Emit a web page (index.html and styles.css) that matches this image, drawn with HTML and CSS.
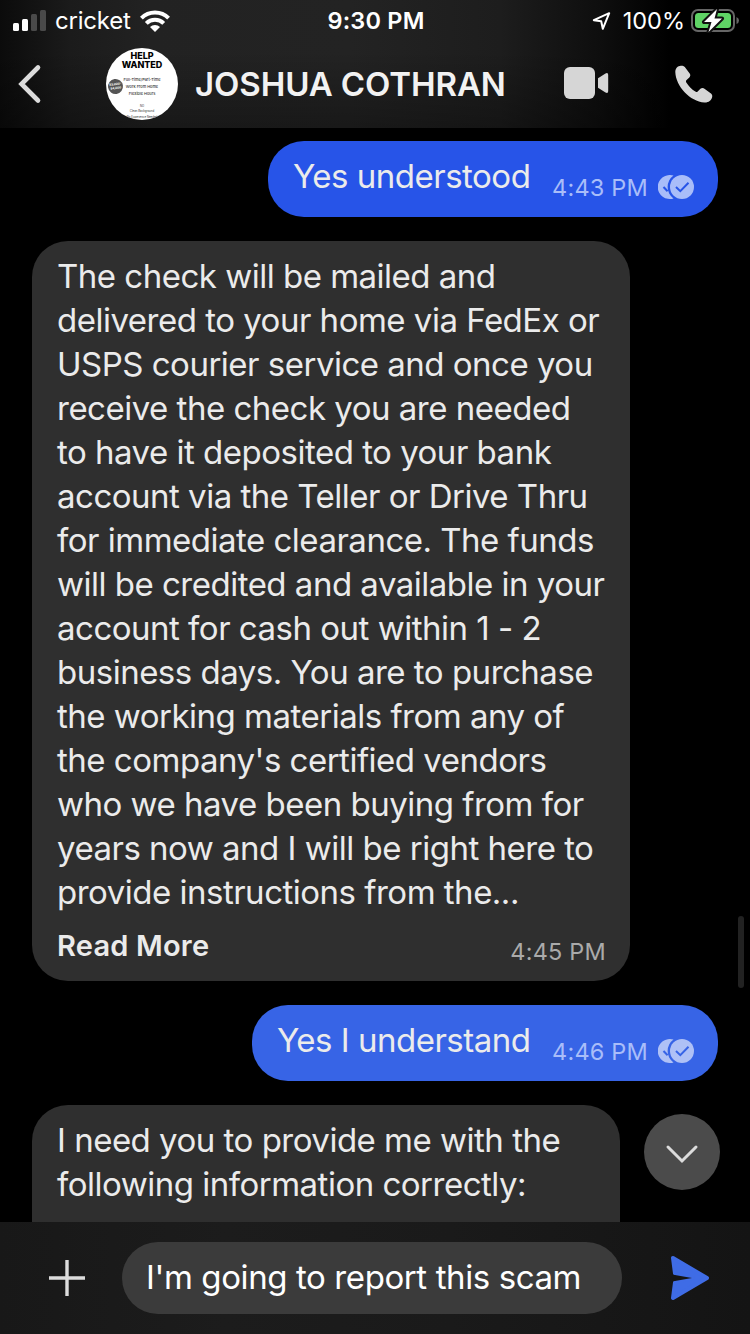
FILE: index.html
```html
<!DOCTYPE html>
<html lang="en">
<head>
    <meta charset="UTF-8">
    <meta name="viewport" content="width=device-width, initial-scale=1.0">
    <title>JOSHUA COTHRAN</title>
    <link rel="stylesheet" href="styles.css">
</head>
<body>
    <div class="screen">
        <header class="header">
            <div class="status-bar">
                <div class="status-left">
                    <svg class="signal" width="34" height="22" viewBox="0 0 34 22">
                        <rect x="0" y="13" width="6" height="8" rx="1.5" fill="#fff"/>
                        <rect x="9" y="9" width="6" height="12" rx="1.5" fill="#fff"/>
                        <rect x="18" y="4" width="6" height="17" rx="1.5" fill="#4a4a4a"/>
                        <rect x="27" y="0" width="6" height="21" rx="1.5" fill="#4a4a4a"/>
                    </svg>
                    <span class="carrier">cricket</span>
                    <svg class="wifi" width="30" height="22" viewBox="0 0 30 22">
                        <g fill="none" stroke="#fff" stroke-width="4">
                            <path d="M1.4 8.2 A19.2 19.2 0 0 1 28.6 8.2"/>
                            <path d="M6.3 13.3 A12.3 12.3 0 0 1 23.7 13.3"/>
                        </g>
                        <path d="M15 22 L10 17 A7.1 7.1 0 0 1 20 17 Z" fill="#fff"/>
                    </svg>
                </div>
                <span class="clock">9:30 PM</span>
                <div class="status-right">
                    <svg class="location" width="20" height="20" viewBox="0 0 20 20">
                        <path d="M1.8 9.2 L17.2 2.2 L10.8 17.8 L9.2 10.3 Z" fill="none" stroke="#fff" stroke-width="2" stroke-linejoin="round"/>
                    </svg>
                    <span class="percent">100%</span>
                    <svg class="battery" width="48" height="24" viewBox="0 0 48 24">
                        <rect x="1" y="1" width="42" height="21" rx="6" fill="none" stroke="#666" stroke-width="2"/>
                        <rect x="4" y="4" width="36" height="15" rx="3.5" fill="#5fd365"/>
                        <path d="M45.5 8 Q48 9 48 11.5 Q48 14 45.5 15 Z" fill="#666"/>
                        <path d="M26 0 L13 13 L20.5 13 L17.5 23 L31 9.5 L23.5 9.5 Z" fill="#fff" stroke="#111" stroke-width="4" stroke-linejoin="round" paint-order="stroke"/>
                    </svg>
                </div>
            </div>
            <div class="nav">
                <svg class="back" width="24" height="40" viewBox="0 0 24 40">
                    <path d="M20 3.5 L3.5 20 L20 36.5" fill="none" stroke="#dcdcdc" stroke-width="4.6" stroke-linecap="round"/>
                </svg>
                <div class="avatar">
                    <p class="avatar-title">HELP<br>WANTED</p>
                    <p class="avatar-lines">Full-Time/Part-Time<br>Work From Home<br>Flexible Hours</p>
                    <p class="avatar-foot">NO<br>Clean Background<br>No Experience Needed</p>
                    <span class="avatar-badge">$3,000-<br>$4,000</span>
                </div>
                <h1 class="contact">JOSHUA COTHRAN</h1>
                <svg class="video" width="46" height="34" viewBox="0 0 46 34">
                    <rect x="0" y="1" width="31" height="32" rx="6" fill="#d6d6d6"/>
                    <path d="M34 12.2 L41.5 7.4 Q44.2 6.2 44.2 9 L44.2 25 Q44.2 27.8 41.5 26.6 L34 21.8 Z" fill="#d6d6d6"/>
                </svg>
                <svg class="phone" width="38" height="38" viewBox="0 0 38 38">
                    <path d="M6.5 0.7 C3 0.3 0.3 3.2 0.3 7 C0.8 21.5 15 36.5 29.5 37.5 C33.5 37.7 36.3 35.5 37.2 32 C37.5 30.5 37 29.4 36 28.5 L29.8 23.9 C28.4 22.8 26.8 22.7 25.4 23.7 L22.7 26.4 C21.9 27.1 21.1 27.1 20.3 26.6 C16.6 24.2 13.5 21 11.3 17.4 C10.8 16.6 10.9 15.8 11.6 15.1 L14.3 12.5 C15.5 11.2 15.6 9.8 14.7 8.5 L9.8 2.1 C8.9 1 7.8 0.7 6.5 0.7 Z" fill="#d6d6d6"/>
                </svg>
            </div>
        </header>

        <main class="chat">
            <div class="bubble sent">
                <p>Yes understood</p>
                <div class="meta">
                    <span class="time">4:43 PM</span>
                    <svg class="read" width="36" height="24" viewBox="0 0 36 24">
                        <path d="M15.5 0.6 A12 12 0 1 0 15.5 23.4 A14 14 0 0 1 15.5 0.6 Z" fill="#a9bdf9"/>
                        <path d="M5.5 12 L9.6 16.3" fill="none" stroke="#2754e8" stroke-width="2"/>
                        <circle cx="24" cy="12" r="12" fill="#a9bdf9"/>
                        <path d="M18 12 L22.3 16.2 L30.5 7.8" fill="none" stroke="#2754e8" stroke-width="2"/>
                    </svg>
                </div>
            </div>

            <div class="bubble received">
                <p>
                    The check will be mailed and<br>
                    delivered to your home via FedEx or<br>
                    USPS courier service and once you<br>
                    receive the check you are needed<br>
                    to have it deposited to your bank<br>
                    account via the Teller or Drive Thru<br>
                    for immediate clearance. The funds<br>
                    will be credited and available in your<br>
                    account for cash out within 1 - 2<br>
                    business days. You are to purchase<br>
                    the working materials from any of<br>
                    the company's certified vendors<br>
                    who we have been buying from for<br>
                    years now and I will be right here to<br>
                    provide instructions from the...
                </p>
                <div class="bubble-footer">
                    <span class="read-more">Read More</span>
                    <span class="time">4:45 PM</span>
                </div>
            </div>

            <div class="bubble sent sent-lower">
                <p>Yes I understand</p>
                <div class="meta">
                    <span class="time">4:46 PM</span>
                    <svg class="read" width="36" height="24" viewBox="0 0 36 24">
                        <path d="M15.5 0.6 A12 12 0 1 0 15.5 23.4 A14 14 0 0 1 15.5 0.6 Z" fill="#afc1f6"/>
                        <path d="M5.5 12 L9.6 16.3" fill="none" stroke="#3764e6" stroke-width="2"/>
                        <circle cx="24" cy="12" r="12" fill="#afc1f6"/>
                        <path d="M18 12 L22.3 16.2 L30.5 7.8" fill="none" stroke="#3764e6" stroke-width="2"/>
                    </svg>
                </div>
            </div>

            <div class="bubble received cut">
                <p>
                    I need you to provide me with the<br>
                    following information correctly:
                </p>
            </div>

            <div class="scrollbar"></div>
            <div class="scroll-down">
                <svg width="34" height="20" viewBox="0 0 34 20">
                    <path d="M3 3 L17 17 L31 3" fill="none" stroke="#dcdcdc" stroke-width="3" stroke-linecap="round"/>
                </svg>
            </div>
        </main>

        <footer class="composer">
            <svg class="plus" width="36" height="36" viewBox="0 0 36 36">
                <path d="M18 0 V36 M0 18 H36" stroke="#dcdcdc" stroke-width="3.4"/>
            </svg>
            <div class="input">I'm going to report this scam</div>
            <svg class="send" width="40" height="46" viewBox="0 0 40 46">
                <path d="M3 3 L37 23 L3 43 L5 27.5 L23 23 L5 18.5 Z" fill="#3f6ce6" stroke="#3f6ce6" stroke-width="4" stroke-linejoin="round"/>
                <path d="M2 19.5 L22 23 L2 26.5 Z" fill="#151515"/>
            </svg>
        </footer>
    </div>
</body>
</html>
```

FILE: styles.css
```css
* {
    box-sizing: border-box;
}
body {
    margin: 0;
    background-color: #000;
    font-family: Inter, "Liberation Sans", sans-serif;
    color: #ebebeb;
}
p, h1 {
    margin: 0;
}
svg {
    display: block;
    flex-shrink: 0;
}
.screen {
    width: 750px;
    height: 1334px;
    display: flex;
    flex-direction: column;
    overflow: hidden;
}

/* Header */
.header {
    height: 128px;
    flex-shrink: 0;
    background: linear-gradient(to bottom, rgba(0, 0, 0, 0) 40%, rgba(0, 0, 0, 0.3)),
        linear-gradient(to right, #0b0b0b 0, #1b1b1b 70px, #222 150px, #232323 350px, #1d1d1d 500px, #0e0e0e 600px, #000 670px);
}
.status-bar {
    height: 40px;
    display: grid;
    grid-template-columns: 1fr auto 1fr;
    align-items: center;
    padding: 1px 11px 0 13px;
    color: #fff;
    font-size: 24px;
    line-height: 40px;
}
.status-left, .status-right {
    display: flex;
    align-items: center;
}
.status-right {
    justify-content: flex-end;
}
.signal, .wifi {
    margin-top: -1px;
}
.carrier {
    margin: 0 9px 0 8px;
    letter-spacing: -0.2px;
}
.clock {
    font-weight: 600;
    font-size: 23.5px;
    letter-spacing: 0.2px;
}
.percent {
    margin: 0 6px 0 11px;
    font-size: 23.5px;
}
.nav {
    height: 88px;
    display: flex;
    align-items: center;
    padding: 0 37px 0 18px;
}
.avatar {
    position: relative;
    width: 72px;
    height: 72px;
    margin-left: 64px;
    margin-top: -1px;
    border-radius: 50%;
    overflow: hidden;
    background-color: #fff;
    color: #333;
    text-align: center;
    white-space: nowrap;
    flex-shrink: 0;
}
.avatar-title {
    padding-top: 3px;
    color: #000;
    font-size: 9px;
    font-weight: 800;
    line-height: 9.5px;
}
.avatar-lines {
    padding-top: 6px;
    font-size: 3.9px;
    font-weight: 500;
    line-height: 7px;
}
.avatar-foot {
    margin-top: 4px;
    padding-top: 3px;
    font-size: 2.8px;
    line-height: 5.5px;
}
.avatar-badge {
    position: absolute;
    left: 2px;
    top: 31px;
    width: 15px;
    height: 15px;
    padding-top: 4px;
    border-radius: 50%;
    background-color: #555;
    color: #fff;
    font-size: 3px;
    font-weight: 700;
    line-height: 3.5px;
    transform: rotate(-8deg);
}
.contact {
    width: 369px;
    padding-left: 17px;
    color: #f2f2f2;
    font-size: 33px;
    font-weight: 600;
    letter-spacing: -0.1px;
    line-height: 44px;
    white-space: nowrap;
}
.phone {
    margin-left: auto;
}
.video {
    margin-top: -2px;
    margin-left: 17px;
}

/* Messages */
.chat {
    position: relative;
    flex: 1;
    min-height: 0;
    display: flex;
    flex-direction: column;
    align-items: flex-start;
    gap: 24px;
    padding: 13px 32px 0;
    overflow: hidden;
}
.bubble {
    flex-shrink: 0;
    border-radius: 36px;
    font-size: 33px;
    letter-spacing: -0.5px;
    line-height: 44px;
    white-space: nowrap;
}
.sent {
    align-self: flex-end;
    display: flex;
    justify-content: space-between;
    width: 450px;
    height: 76px;
    padding: 13px 24px 0 25px;
    background-color: #2754e8;
}
.sent-lower {
    width: 466px;
    background-color: #3764e6;
}
.meta {
    display: flex;
    align-items: center;
    gap: 10px;
    height: 44px;
    margin-top: 11px;
}
.time {
    padding-top: 1px;
    font-size: 23.5px;
    letter-spacing: 0.2px;
}
.sent .time {
    color: #a9bdf9;
}
.received {
    width: 598px;
    height: 740px;
    padding: 13px 24px 0 25px;
    background-color: #2f2f2f;
}
.bubble-footer {
    display: flex;
    justify-content: space-between;
    padding: 10px 0 0;
}
.bubble-footer .time {
    padding-top: 6px;
    color: #aaa;
}
.read-more {
    font-size: 29px;
    font-weight: 600;
    letter-spacing: 0.2px;
}
.cut {
    width: 588px;
    height: 200px;
}
.scrollbar {
    position: absolute;
    right: 6px;
    top: 788px;
    width: 6px;
    height: 72px;
    border-radius: 3px;
    background-color: #222;
}
.scroll-down {
    position: absolute;
    right: 30px;
    bottom: 32px;
    width: 76px;
    height: 76px;
    display: flex;
    justify-content: center;
    align-items: center;
    padding-top: 3px;
    border-radius: 50%;
    background-color: #4b4b4b;
}

/* Composer */
.composer {
    height: 112px;
    flex-shrink: 0;
    display: flex;
    align-items: center;
    padding: 0 40px 0 49px;
    background: linear-gradient(to right, #181818, #1c1c1c 30%, #1a1a1a 60%, #141414);
}
.input {
    width: 500px;
    height: 72px;
    margin-left: 37px;
    padding: 13px 24px;
    border-radius: 36px;
    background-color: #3b3b3b;
    color: #fff;
    font-size: 33px;
    letter-spacing: -0.4px;
    line-height: 44px;
    white-space: nowrap;
}
.send {
    margin-left: auto;
}
```
